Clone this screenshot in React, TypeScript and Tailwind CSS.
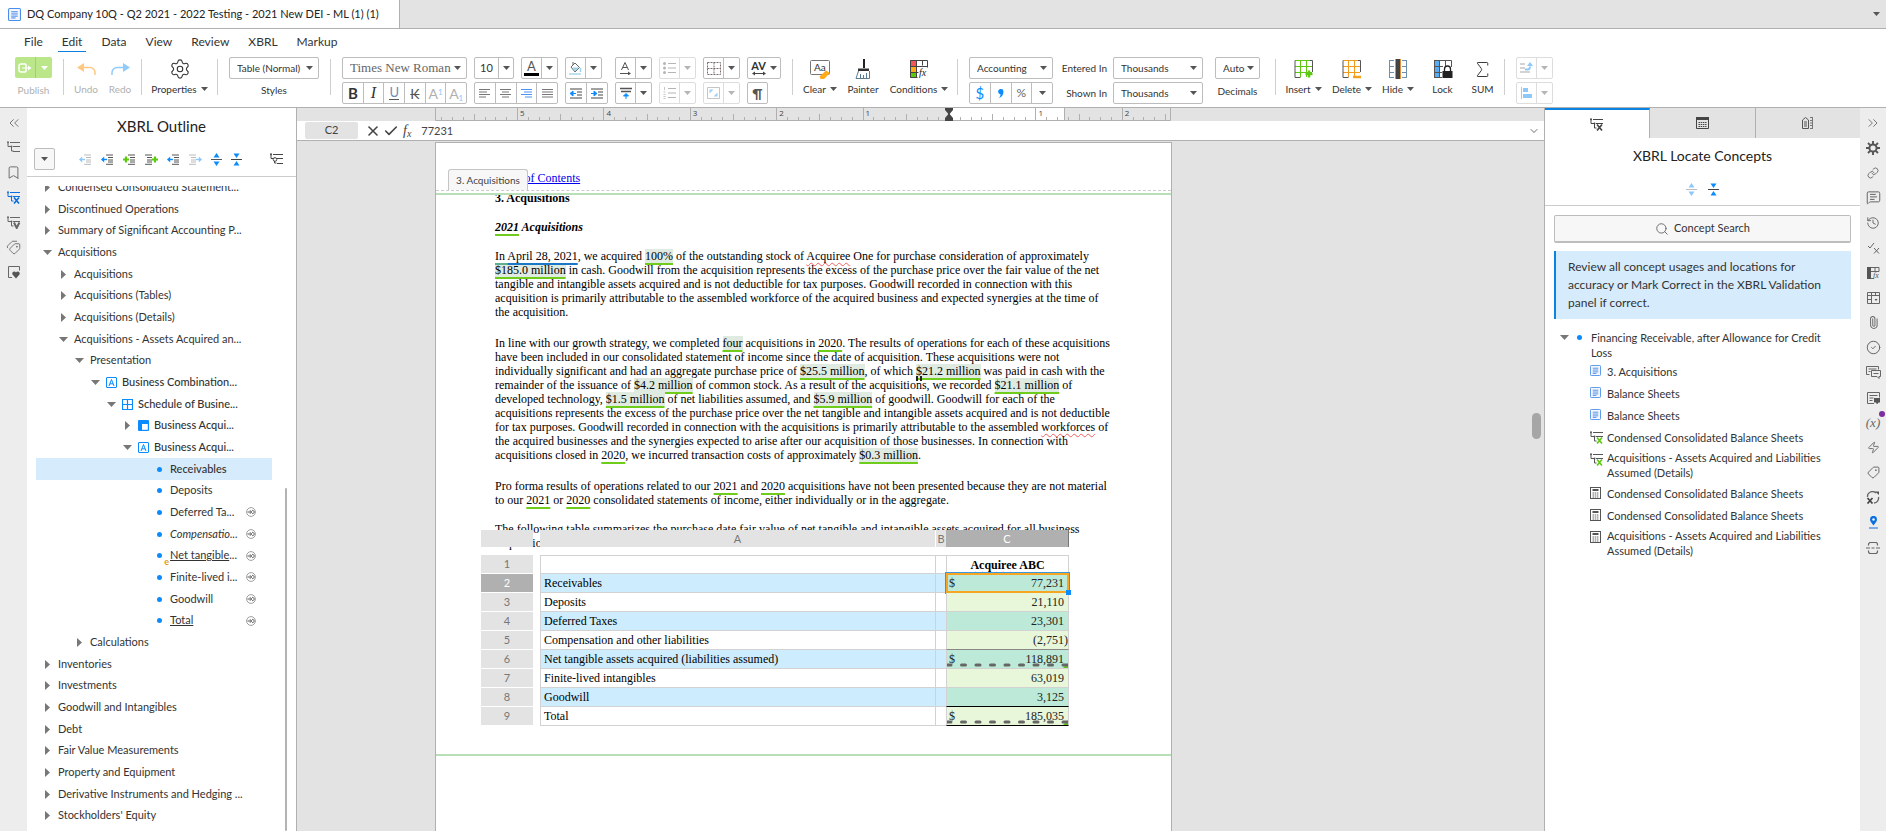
import type { ReactNode } from 'react';
import {
  ChevronsLeft, ChevronsRight, ChevronDown, Bookmark, Tags, Tag, Settings, Link, MessageSquareText,
  History, Paperclip, CircleCheck, Zap, Search, Sigma, X, Check,
} from 'lucide-react';

/* ---------- small shared pieces ---------- */

function Svg({ w, h, vb, children, className = '' }: { w: number; h: number; vb?: string; children: ReactNode; className?: string }) {
  return (
    <svg width={w} height={h} viewBox={vb ?? `0 0 ${w} ${h}`} fill="none" aria-hidden="true" className={`shrink-0 ${className}`}>
      {children}
    </svg>
  );
}

const Caret = ({ className = 'text-[#555]' }: { className?: string }) => (
  <Svg w={7} h={4} className={className}><path d="M0 0h7L3.5 4z" fill="currentColor" /></Svg>
);

const Sep = () => <div className="mx-[11px] mt-0.5 h-9 w-px shrink-0 bg-[#cfcfcf]" />;

function Select({ label, value, className, textClass = 'text-[10px] text-[#333]' }: { label: string; value: string; className: string; textClass?: string }) {
  return (
    <div className={`relative h-[22px] shrink-0 ${className}`}>
      <select aria-label={label} defaultValue={value} className={`h-full w-full appearance-none rounded-[2px] border border-[#bdbdbd] bg-white pl-[7px] ${textClass}`}>
        <option>{value}</option>
      </select>
      <span className="pointer-events-none absolute top-[9px] right-1.5"><Caret /></span>
    </div>
  );
}

/* A row of joined square tool buttons */
function Joined({ children, className = '', faded = false }: { children: ReactNode; className?: string; faded?: boolean }) {
  return (
    <div className={`flex h-[22px] shrink-0 divide-x rounded-[2px] border ${faded ? 'divide-[#ddd] border-[#ddd]' : 'divide-[#bdbdbd] border-[#bdbdbd]'} ${className}`}>
      {children}
    </div>
  );
}

function Btn({ label, children, className = 'flex-1' }: { label: string; children: ReactNode; className?: string }) {
  return (
    <button type="button" aria-label={label} className={`flex items-center justify-center ${className}`}>{children}</button>
  );
}

function Split({ label, children, faded = false, className = 'w-[37px]' }: { label: string; children: ReactNode; faded?: boolean; className?: string }) {
  return (
    <Joined className={className} faded={faded}>
      <Btn label={label} className="w-5">{children}</Btn>
      <Btn label={`${label} options`}><Caret className={faded ? 'text-[#b5b5b5]' : 'text-[#555]'} /></Btn>
    </Joined>
  );
}

function BigTool({ label, children, className, caret = false, labelClass = 'text-[#333]' }: { label: string; children: ReactNode; className: string; caret?: boolean; labelClass?: string }) {
  return (
    <button type="button" className={`flex shrink-0 flex-col items-center ${className}`}>
      <span className="flex h-6 items-center">{children}</span>
      <span className={`flex h-4 items-center gap-1 text-[10px] whitespace-nowrap ${labelClass}`}>{label}{caret && <Caret />}</span>
    </button>
  );
}

/* ---------- icons ---------- */

const Lines = ({ xs, color = '#777' }: { xs: [number, number][]; color?: string }) => (
  <Svg w={13} h={11}>{xs.map(([a, b], i) => <path key={i} d={`M${a} ${1.5 + i * 2.5}H${b}`} stroke={color} />)}</Svg>
);

const DocIcon = ({ s = 12 }: { s?: number }) => (
  <Svg w={s} h={s} vb="0 0 12 12">
    <rect x=".5" y=".5" width="11" height="11" rx="1" stroke="#4a90e8" fill="#f5f6ff" />
    <path d="M3 3.5h6M3 5.5h6M3 7.5h6M3 9.2h4" stroke="#3b82e6" strokeWidth=".9" />
  </Svg>
);

function OutlineIcon({ mark = '', color = '#666', markColor }: { mark?: string; color?: string; markColor?: string }) {
  const m = markColor ?? color;
  return (
    <Svg w={14} h={13}>
      <path d="M1 1.5v4h3M3 1.5h10M6 5.5h7M4.5 5.5v4.500h2" stroke={color} />
      <circle cx="1" cy="1.3" r="1" fill={color} />
      <circle cx="4.500" cy="5.500" r="1" fill={color} />
      {mark === '' && <path d="M6 10.500h7" stroke={color} />}
      {mark === 'o' && <><circle cx="5" cy="6.500" r="1.800" fill="#fff" stroke={color} /><path d="M7 10.500h6" stroke={color} /></>}
      {mark === 'x' && <path d="M7 6.500l5 6M12 6.500l-5 6" stroke={m} strokeWidth="1.600" />}
      {mark === 'v' && <path d="M7 6.500l2.700 5.500 2.700-5.500" stroke={m} strokeWidth="2" />}
    </Svg>
  );
}

/* List lines with a coloured arrow or plus beside them */
function ListArrow({ kind, side = 'left', color, line = '#555' }: { kind: 'plus' | 'left' | 'right'; side?: 'left' | 'right'; color: string; line?: string }) {
  const lx = side === 'left' ? 5 : 0;
  const ax = side === 'left' ? 0 : 7;
  return (
    <Svg w={13} h={11}>
      <path d={`M${lx} 1h7M${lx + 2} 3.500h5M${lx + 2} 6h5M${lx + 2} 8h5M${lx} 10.300h7`} stroke={line} />
      {kind === 'plus' && <path d={`M${ax} 5.500h6M${ax + 3} 2.500v6`} stroke={color} strokeWidth="2.200" />}
      {kind === 'left' && <><path d={`M${ax + 2} 5.500h4`} stroke={color} strokeWidth="1.400" /><path d={`M${ax} 5.500l3.200-3v6z`} fill={color} /></>}
      {kind === 'right' && <><path d={`M${ax} 5.500h4`} stroke={color} strokeWidth="1.400" /><path d={`M${ax + 6} 5.500l-3.200-3v6z`} fill={color} /></>}
    </Svg>
  );
}

const ExpandIcon = ({ faded = false }: { faded?: boolean }) => (
  <Svg w={11} h={13}>
    <path d="M5.500 0l3 4.500h-6zM5.500 13l3-4.500h-6z" fill={faded ? '#8cc8fa' : '#0a8cff'} />
    <path d="M0 6.500h11" stroke={faded ? '#bbb' : '#555'} />
  </Svg>
);

const CollapseIcon = () => (
  <Svg w={11} h={13}>
    <path d="M5.500 5l3-4.500h-6zM5.500 8l3 4.500h-6z" fill="#0a8cff" />
    <path d="M0 6.500h11" stroke="#444" />
  </Svg>
);

const GridIcon = ({ color, children }: { color: string; children?: ReactNode }) => (
  <Svg w={20} h={20}>
    <path d="M1 1.500h17M1 7.500h17M1 13.500h17M6.500 1v17M12.500 1v17" stroke={color} />
    <path d="M6.500 18.500h-5.500v-17M18.500 13v-11.500h-2.500" stroke="#555" />
    {children}
  </Svg>
);

const CalcIcon = () => (
  <Svg w={11} h={12}>
    <rect x=".5" y=".5" width="10" height="11" stroke="#555" />
    <path d="M2.500 3h6" stroke="#555" strokeWidth="2" />
    <path d="M2.500 6h6M2.500 8h6M2.500 10h6" stroke="#666" strokeDasharray="1.500 .700" />
  </Svg>
);

const BoxA = () => (
  <Svg w={11} h={11}>
    <rect x=".5" y=".5" width="10" height="10" rx=".5" stroke="#0a8cff" />
    <path d="M3 9l2.500-6.500 2.500 6.500M3.900 6.800h3.200" stroke="#0a8cff" />
  </Svg>
);

const BoxGrid = () => (
  <Svg w={11} h={11}><path d="M.5.5h10v10h-10zM5.500.5v10M.5 5.500h10" stroke="#0a8cff" strokeWidth="1.200" /></Svg>
);

const BoxAxis = () => (
  <Svg w={11} h={11}><rect width="11" height="11" rx="1" fill="#0a8cff" /><path d="M4 4h5.800v5.800H4z" fill="#fff" /></Svg>
);

const GoIcon = () => (
  <Svg w={10} h={10}>
    <circle cx="5" cy="5" r="4.400" stroke="#888" strokeWidth=".8" />
    <path d="M1.500 5h4M4 3.300l1.700 1.700-1.700 1.700M6 3.500a1.600 1.600 0 1 1 0 3" stroke="#444" strokeWidth=".9" />
  </Svg>
);

/* ---------- top ---------- */

function TitleBar() {
  return (
    <header className="flex h-[29px] shrink-0 border-b border-[#b0b0b0] bg-[#e3e3e3]">
      <div className="flex h-full w-[400px] items-center gap-1.5 border-r border-[#b0b0b0] bg-white pl-2 text-[11px] whitespace-nowrap text-[#222]">
        <DocIcon s={13} />
        DQ Company 10Q - Q2 2021 - 2022 Testing - 2021 New DEI - ML (1) (1)
      </div>
      <button type="button" aria-label="Documents" className="mr-1.5 ml-auto"><Caret /></button>
    </header>
  );
}

function MenuBar() {
  const items = ['File', 'Edit', 'Data', 'View', 'Review', 'XBRL', 'Markup'];
  return (
    <nav className="flex h-[23px] shrink-0 items-end gap-[11px] bg-white pl-5 text-[12px] text-[#333]">
      {items.map((m) => (
        <button key={m} type="button" className={`h-[19px] border-b px-1 ${m === 'Edit' ? 'border-[#0a7fe0]' : 'border-transparent'}`}>{m}</button>
      ))}
    </nav>
  );
}

function Toolbar() {
  return (
    <div className="flex h-14 shrink-0 items-start overflow-hidden border-b border-[#b0b0b0] bg-white pt-[5px] pl-[15px] text-[10px] text-[#333]">
      <div className="flex w-[37px] shrink-0 flex-col items-center gap-1">
        <div className="flex h-[21px] w-full divide-x divide-[#9fd465] rounded-[2px] bg-[#bbe78a]">
          <Btn label="Publish document" className="w-[21px]">
            <Svg w={14} h={10}><path d="M8 1H3a2 2 0 0 0-2 2v4a2 2 0 0 0 2 2h5" stroke="#fff" strokeWidth="1.500" /><path d="M8 1v8" stroke="#fff" strokeWidth="1.500" /><path d="M4 5h7" stroke="#fff" /><path d="M10 2.500L13.500 5 10 7.500z" fill="#fff" /></Svg>
          </Btn>
          <Btn label="Publish options"><Caret className="text-white" /></Btn>
        </div>
        <span className="leading-4 text-[#b0b0b0]">Publish</span>
      </div>
      <Sep />
      <BigTool label="Undo" className="mr-[13px] w-[22px]" labelClass="text-[#b0b0b0]">
        <Svg w={19} h={14}><path d="M7 1v9L0 5.500z" fill="#ffc983" /><path d="M6 5.500h7a5 5 0 0 1 5 5V13" stroke="#ffc983" strokeWidth="1.500" /></Svg>
      </BigTool>
      <BigTool label="Redo" className="w-5" labelClass="text-[#b0b0b0]">
        <Svg w={19} h={14}><path d="M12 1v9l7-4.500z" fill="#90cbfb" /><path d="M13 5.500H6a5 5 0 0 0-5 5V13" stroke="#90cbfb" strokeWidth="1.500" /></Svg>
      </BigTool>
      <Sep />
      <BigTool label="Properties" className="w-[53px]" caret><Settings size={22} strokeWidth={1.2} /></BigTool>
      <Sep />
      <div className="flex w-[90px] shrink-0 flex-col items-center gap-[3px]">
        <Select label="Style" value="Table (Normal)" className="w-full" />
        <span className="leading-4">Styles</span>
      </div>
      <Sep />
      <div className="flex gap-[7px]">
        <div className="flex w-[125px] flex-col gap-[3px]">
          <Select label="Font" value="Times New Roman" className="w-full" textClass="font-['Liberation_Serif',serif] text-[13px] text-[#666]" />
          <Joined>
            <Btn label="Bold"><b className="text-[15px] text-[#333]">B</b></Btn>
            <Btn label="Italic"><i className="font-['Liberation_Serif',serif] text-[16px]">I</i></Btn>
            <Btn label="Underline"><span className="border-b border-[#555] text-[13px] leading-[13px] text-[#6a8db8]">U</span></Btn>
            <Btn label="Strikethrough"><span className="text-[14px] text-[#555] line-through">K</span></Btn>
            <Btn label="Superscript"><span className="text-[14px] text-[#b0b0b0]">A<sup className="text-[8px] text-[#8cc8fa]">1</sup></span></Btn>
            <Btn label="Subscript"><span className="text-[14px] text-[#b0b0b0]">A<sub className="text-[8px] text-[#8cc8fa]">1</sub></span></Btn>
          </Joined>
        </div>
        <div className="flex w-[84px] flex-col gap-[3px]">
          <div className="flex gap-[7px]">
            <Joined className="w-10">
              <Btn label="Font size" className="w-6"><span className="text-[11px]">10</span></Btn>
              <Btn label="Font size options"><Caret /></Btn>
            </Joined>
            <Split label="Font color"><span className="border-b-[3px] border-black px-[3px] text-[13px] leading-[13px] text-[#555]">A</span></Split>
          </div>
          <Joined>
            <Btn label="Align left"><Lines xs={[[1, 12], [1, 9], [1, 12], [1, 8]]} /></Btn>
            <Btn label="Align center"><Lines xs={[[1, 12], [3, 10], [1, 12], [3, 10]]} /></Btn>
            <Btn label="Align right"><Lines color="#4d94f0" xs={[[1, 12], [4, 12], [1, 12], [5, 12]]} /></Btn>
            <Btn label="Justify"><Lines xs={[[1, 12], [1, 12], [1, 12], [1, 12]]} /></Btn>
          </Joined>
        </div>
        <div className="flex w-[43px] flex-col gap-[3px]">
          <Split label="Fill color">
            <Svg w={15} h={14}><path d="M1 13h12" stroke="#bfe0ee" strokeWidth="2" /><path d="M3 6l4-4 4.500 4.500L7 11z" stroke="#666" /><path d="M4.500 6.500h6.500L7 10.500z" fill="#9ed4ea" /><path d="M5 4V1" stroke="#666" /><path d="M12.500 7v4" stroke="#9ed4ea" strokeWidth="1.500" /></Svg>
          </Split>
          <Joined>
            <Btn label="Decrease indent"><Svg w={12} h={11}><path d="M0 1h12M7 4h5M7 7h5M0 10h12" stroke="#444" /><path d="M0 5.500L3 3v5zM2 5.500h4" fill="#0a8cff" stroke="#0a8cff" /></Svg></Btn>
            <Btn label="Increase indent"><Svg w={12} h={11}><path d="M0 1h12M7 4h5M7 7h5M0 10h12" stroke="#444" /><path d="M6 5.500L3 3v5zM0 5.500h4" fill="#0a8cff" stroke="#0a8cff" /></Svg></Btn>
          </Joined>
        </div>
        <div className="flex w-[37px] flex-col gap-[3px]">
          <Split label="Text direction">
            <Svg w={12} h={13}><path d="M1.500 8L5 0.500 8.500 8M2.700 5.500h4.600" stroke="#555" /><path d="M0 11.500h9" stroke="#555" /><path d="M8 9.500l3 2-3 2z" fill="#555" /></Svg>
          </Split>
          <Split label="Vertical align">
            <Svg w={12} h={12}><path d="M0 1.500h12M1 4.500h10" stroke="#555" strokeWidth="1.300" /><path d="M6 6.500l2.500 2.500h-5zM6 8v4" fill="#0a8cff" stroke="#0a8cff" /></Svg>
          </Split>
        </div>
        <div className="flex w-[37px] flex-col gap-[3px]">
          <Split label="Bullets" faded><Svg w={13} h={12}><path d="M5 1.500h8M5 6h8M5 10.500h8" stroke="#b5b5b5" /><circle cx="1.500" cy="1.500" r="1.500" fill="#b5b5b5" /><circle cx="1.500" cy="6" r="1.500" fill="#b5b5b5" /><circle cx="1.500" cy="10.500" r="1.500" fill="#b5b5b5" /></Svg></Split>
          <Split label="Numbering" faded><Svg w={13} h={12}><path d="M5 1.500h8M5 6h8M5 10.500h8" stroke="#b5b5b5" /><path d="M1.500 0v3M.5 5h2M.5 7.500h2M.5 9.500h2M.5 11.500h2" stroke="#c5c5c5" /></Svg></Split>
        </div>
        <div className="flex w-[37px] flex-col gap-[3px]">
          <Split label="Borders"><Svg w={14} h={13}><path d="M.5.5h13v12H.5zM7 .5v12M.5 6.500h13" stroke="#7a6a6a" strokeDasharray="2 1" /></Svg></Split>
          <Split label="Merge cells" faded><Svg w={13} h={12}><path d="M.5.5h12v11H.5z" stroke="#c5c5c5" /><path d="M2.500 2.500h4l-4 4zM10.500 9.500h-4l4-4z" fill="#9ed0f5" /></Svg></Split>
        </div>
        <div className="flex flex-col gap-[3px]">
          <Joined className="w-[34px]">
            <button type="button" aria-label="Character spacing" className="flex flex-1 items-center justify-center gap-1">
              <span className="flex flex-col items-center text-[11px] leading-[10px] font-bold">AV<Svg w={14} h={5}><path d="M1 2.500h12" stroke="#444" /><path d="M0 2.500L3 .5v4zM14 2.500L11 .5v4z" fill="#444" /></Svg></span>
              <Caret />
            </button>
          </Joined>
          <Joined className="w-[21px]"><Btn label="Show marks"><span className="text-[14px] font-bold text-[#555]">¶</span></Btn></Joined>
        </div>
      </div>
      <Sep />
      <BigTool label="Clear" className="mr-3 w-8" caret>
        <Svg w={21} h={19}><rect x=".5" y=".5" width="19" height="14" rx="1" stroke="#777" fill="#fff" /><text x="4" y="11" fontSize="10" fill="#333" fontFamily="Lato, sans-serif">Aa</text><path d="M9.500 16.500l6.500-6 4 2.500-6 6h-3.500z" fill="#ffab1a" /></Svg>
      </BigTool>
      <BigTool label="Painter" className="mr-3.5 w-[30px]">
        <Svg w={16} h={21}><path d="M9 0v9" stroke="#222" strokeWidth="2" /><path d="M3 12V9.500h11V12z" fill="#333" /><path d="M3.500 12L1 19.500h13.500V12M5.500 19v-4M8.500 19v-3M11.500 19v-5" stroke="#5a7c94" /></Svg>
      </BigTool>
      <BigTool label="Conditions" className="w-[54px]" caret>
        <Svg w={18} h={18}>
          <path d="M0 0h6v6H0z" fill="#f25555" /><path d="M0 6h6v6H0z" fill="#ffab1a" /><path d="M0 12h6v6H0z" fill="#5dc90e" />
          <path d="M.5.5h17v7M.5.5v17h7M6.500.5v17M12.500.5v5M.5 6.500h17M.5 12.500h8" stroke="#444" />
          <text x="9" y="16" fontSize="10" fontStyle="italic" fill="#222" fontFamily="Liberation Serif, serif">fx</text>
        </Svg>
      </BigTool>
      <Sep />
      <div className="flex w-[84px] shrink-0 flex-col gap-[3px]">
        <Select label="Number format" value="Accounting" className="w-full" />
        <Joined>
          <Btn label="Currency"><span className="text-[15px] text-[#0a8cff]">$</span></Btn>
          <Btn label="Thousands separator"><Svg w={6} h={9}><path d="M3 0a2.500 2.500 0 0 1 2.500 2.600C5.500 5.500 4 8 1 9c1-1.300 1.500-2.300 1.500-3.800A2.500 2.500 0 0 1 3 0z" fill="#0a8cff" /></Svg></Btn>
          <Btn label="Percent"><span className="text-[12px] text-[#666]">%</span></Btn>
          <Btn label="More formats"><Caret /></Btn>
        </Joined>
      </div>
      <div className="ml-2.5 flex w-11 shrink-0 flex-col items-end gap-[3px] whitespace-nowrap">
        <span className="flex h-[22px] items-center">Entered In</span>
        <span className="flex h-[22px] items-center">Shown In</span>
      </div>
      <div className="ml-1.5 flex w-[90px] shrink-0 flex-col gap-[3px]">
        <Select label="Entered in" value="Thousands" className="w-full" />
        <Select label="Shown in" value="Thousands" className="w-full" />
      </div>
      <div className="ml-3 flex w-[45px] shrink-0 flex-col items-center gap-1">
        <Select label="Decimals" value="Auto" className="w-full" />
        <span className="leading-4">Decimals</span>
      </div>
      <div className="ml-1"><Sep /></div>
      <BigTool label="Insert" className="mr-3.5 w-[33px]" caret><GridIcon color="#5cc814"><path d="M15 11.500v7M11.500 15h7" stroke="#5cc814" strokeWidth="2.500" /></GridIcon></BigTool>
      <BigTool label="Delete" className="mr-[13px] w-9" caret><GridIcon color="#f09a1e"><path d="M11 18h8" stroke="#f5a11e" strokeWidth="2.500" /></GridIcon></BigTool>
      <BigTool label="Hide" className="mr-5 w-[30px]" caret>
        <Svg w={20} h={20}><path d="M1 1.500h5M1 7.500h5M1 13.500h5M1 18.500h5M1.500 1v18M14 1.500h5M14 7.500h5M14 13.500h5M14 18.500h5M18.500 1v18" stroke="#6f8fb0" /><path d="M8 0h5v20H8z" fill="#444" /><path d="M7.500 0v20M12.500 0v20" stroke="#e0903f" /></Svg>
      </BigTool>
      <BigTool label="Lock" className="mr-5 w-[19px]">
        <Svg w={20} h={20}><path d="M1 1h6v17H1z" fill="#58aef5" /><path d="M1 1.500h17.500V8M1 7.500h9M1 13.500h8M6.500 1v17M12.500 1v6M1 18.500h8M1.500 1v17" stroke="#555" /><path d="M9.500 12h10v7h-10z" fill="#222" /><path d="M11.500 12v-2a3 3 0 0 1 6 0v2" stroke="#222" strokeWidth="1.300" fill="#fff" /></Svg>
      </BigTool>
      <BigTool label="SUM" className="w-[21px]"><Sigma size={21} strokeWidth={1.1} /></BigTool>
      <Sep />
      <div className="flex shrink-0 flex-col gap-[3px]">
        <Split label="Arrange" faded><Svg w={13} h={12}><path d="M0 2h5M0 6h5M0 10h10" stroke="#c5c5c5" strokeWidth="1.300" /><path d="M5 7.500h2.500q2.500 0 2.500-3" stroke="#8cc8fa" strokeWidth="1.800" /><path d="M7 4l3-4 3 4z" fill="#8cc8fa" /></Svg></Split>
        <Split label="Align objects" faded><Svg w={11} h={12}><path d="M.5 0v12" stroke="#a8c8e0" /><path d="M2 1h5v4H2zM2 7h9v4H2z" fill="#8cc8fa" /></Svg></Split>
      </div>
    </div>
  );
}

/* ---------- left side ---------- */

function LeftRail() {
  const cell = 'flex h-[25px] w-full items-center justify-center text-[#666]';
  return (
    <nav className="flex w-[27px] shrink-0 flex-col bg-[#ededed] pt-0.5">
      <button type="button" aria-label="Collapse panel" className={cell}><ChevronsLeft size={16} strokeWidth={1.3} /></button>
      <button type="button" aria-label="Outline" className={cell}><OutlineIcon /></button>
      <button type="button" aria-label="Bookmarks" className={cell}><Bookmark size={15} strokeWidth={1.5} /></button>
      <button type="button" aria-label="XBRL outline" className={cell}><OutlineIcon mark="x" color="#0a6fe0" /></button>
      <button type="button" aria-label="Validation outline" className={cell}><OutlineIcon mark="v" /></button>
      <button type="button" aria-label="Tags" className={cell}><Tags size={15} strokeWidth={1.4} className="rotate-90" /></button>
      <button type="button" aria-label="Favorites" className={cell}>
        <Svg w={14} h={13}><path d="M5 11.500H1.500v-11h11v4" stroke="#666" /><path d="M9 12.500l-3.500-4a1.900 1.900 0 0 1 3.500-2 1.900 1.900 0 0 1 3.500 2z" fill="#555" /></Svg>
      </button>
    </nav>
  );
}

type Node = {
  t: ReactNode; l: number; open?: boolean; leaf?: boolean; icon?: ReactNode; cls?: string; go?: boolean; sel?: boolean; ext?: boolean;
};

const indent = ['pl-[3px]', 'pl-[19px]', 'pl-[35px]', 'pl-[51px]', 'pl-[67px]', 'pl-[83px]', 'pl-[99px]'];

const tree: Node[] = [
  { t: 'Condensed Consolidated Statement...', l: 0 },
  { t: 'Discontinued Operations', l: 0 },
  { t: 'Summary of Significant Accounting P...', l: 0 },
  { t: 'Acquisitions', l: 0, open: true },
  { t: 'Acquisitions', l: 1 },
  { t: 'Acquisitions (Tables)', l: 1 },
  { t: 'Acquisitions (Details)', l: 1 },
  { t: 'Acquisitions - Assets Acquired an...', l: 1, open: true },
  { t: 'Presentation', l: 2, open: true },
  { t: 'Business Combination...', l: 3, open: true, icon: <BoxA />, cls: 'font-medium' },
  { t: 'Schedule of Busine...', l: 4, open: true, icon: <BoxGrid />, cls: 'font-medium' },
  { t: 'Business Acqui...', l: 5, icon: <BoxAxis />, cls: 'font-medium' },
  { t: 'Business Acqui...', l: 5, open: true, icon: <BoxA />, cls: 'font-medium' },
  { t: 'Receivables', l: 6, leaf: true, sel: true, cls: 'font-medium' },
  { t: 'Deposits', l: 6, leaf: true },
  { t: 'Deferred Ta...', l: 6, leaf: true, go: true },
  { t: 'Compensatio...', l: 6, leaf: true, go: true, cls: 'italic' },
  { t: <><u>Net tangible</u>...</>, l: 6, leaf: true, go: true, ext: true },
  { t: 'Finite-lived i...', l: 6, leaf: true, go: true },
  { t: 'Goodwill', l: 6, leaf: true, go: true },
  { t: <u>Total</u>, l: 6, leaf: true, go: true },
  { t: 'Calculations', l: 2 },
  { t: 'Inventories', l: 0 },
  { t: 'Investments', l: 0 },
  { t: 'Goodwill and Intangibles', l: 0 },
  { t: 'Debt', l: 0 },
  { t: 'Fair Value Measurements', l: 0 },
  { t: 'Property and Equipment', l: 0 },
  { t: 'Derivative Instruments and Hedging ...', l: 0 },
  { t: "Stockholders' Equity", l: 0 },
  { t: 'Commitments and Contingencies', l: 0 },
];

function TreeRow({ n }: { n: Node }) {
  return (
    <li className={`flex h-[22px] items-center nth-[3n]:h-[21px] ${indent[n.l]} ${n.sel ? 'bg-[#d6ecfd]' : ''}`}>
      <span className="flex w-4 shrink-0 justify-center">
        {!n.leaf && (n.open
          ? <Svg w={9} h={5}><path d="M0 0h9L4.500 5z" fill="#777" /></Svg>
          : <Svg w={5} h={9}><path d="M0 0v9L5 4.500z" fill="#777" /></Svg>)}
      </span>
      {n.icon && <span className="flex w-4 shrink-0 justify-center">{n.icon}</span>}
      {n.leaf && (
        <span className="relative flex w-4 shrink-0 justify-center">
          <span className="size-[5px] rounded-full bg-[#0a8cff]" />
          {n.ext && <span className="absolute -right-0.5 -bottom-2 text-[9px] leading-[9px] font-bold text-[#e09a10]">e</span>}
        </span>
      )}
      <button type="button" className={`ml-[3px] text-left whitespace-nowrap ${n.cls ?? ''}`}>{n.t}</button>
      {n.go && <button type="button" aria-label="Go to usage" className="mr-4 ml-auto"><GoIcon /></button>}
    </li>
  );
}

function OutlinePanel() {
  return (
    <section className="relative flex w-[270px] shrink-0 flex-col overflow-hidden border-r border-[#b0b0b0] bg-white">
      <h2 className="pt-1.5 text-center text-[15px] leading-6 text-[#222]">XBRL Outline</h2>
      <div className="mt-2.5 flex h-[29px] shrink-0 items-start border-b border-[#ccc] pl-[7px]">
        <button type="button" aria-label="Filter" className="flex h-[22px] w-[21px] items-center justify-center rounded-[2px] border border-[#bdbdbd] bg-[#f7f7f7]"><Caret /></button>
        <div className="ml-6 flex h-[22px] items-center gap-[9px]">
          <ListArrow kind="left" color="#8cc8fa" line="#bbb" />
          <ListArrow kind="left" color="#0a8cff" />
          <ListArrow kind="plus" color="#5dc90e" />
          <ListArrow kind="plus" side="right" color="#5dc90e" />
          <ListArrow kind="left" color="#0a8cff" />
          <ListArrow kind="right" side="right" color="#8cc8fa" line="#bbb" />
          <ExpandIcon />
          <CollapseIcon />
        </div>
        <span className="mr-3 ml-auto flex h-[22px] items-center"><OutlineIcon mark="o" color="#444" /></span>
      </div>
      <div className="mt-[9px] min-h-0 flex-1 overflow-hidden">
        <ul className="-mt-2.5 mr-6 ml-[9px] text-[11px] text-[#333]">
          {tree.map((n, i) => <TreeRow key={i} n={n} />)}
        </ul>
      </div>
      <span className="absolute top-[380px] right-[9px] bottom-0 w-0.5 rounded-full bg-[#b3b3b3]" />
    </section>
  );
}

/* ---------- document ---------- */

function Ruler() {
  const zero = 514;
  const ticks = Array.from({ length: 68 }, (_, k) => k - 47).filter((i) => i !== 0);
  return (
    <div className="h-[13px] shrink-0 bg-[#e3e3e3] pl-[138px]">
      <svg width="736" height="13" viewBox="0 0 736 13" role="img" aria-label="Ruler">
        <path d="M514 0h115v13H514z" fill="#fff" />
        {ticks.map((i) => {
          const x = Math.round(zero + i * 10.8) + 0.5;
          const inch = i % 8 === 0;
          const top = inch ? 0 : i % 4 === 0 ? 6 : 9;
          return <path key={i} d={`M${x} ${top}V13`} stroke="#b0b0b0" />;
        })}
        {[-5, -4, -3, -2, -1, 1, 2].map((n) => (
          <text key={n} x={zero + n * 86.4 + 3} y="8" fontSize="8" fill="#444" fontFamily="Open Sans, sans-serif">{Math.abs(n)}</text>
        ))}
        <path d="M0.5 0v12.500h735V0M629.500 0v12" stroke="#b0b0b0" fill="none" />
        <path d="M510 0h8v2l-3 3.500v1l3 3.500v3h-8v-3l3-3.500v-1l-3-3.500z" fill="#444" />
      </svg>
    </div>
  );
}

const Tagged = ({ children }: { children: ReactNode }) => (
  <span className="bg-[#dfeae1] underline decoration-[#6fcc1a] decoration-2 underline-offset-[3px] [text-decoration-skip-ink:none]">{children}</span>
);
const Dated = ({ children }: { children: ReactNode }) => (
  <span className="relative underline decoration-[#6fcc1a] decoration-2 underline-offset-[3px] [text-decoration-skip-ink:none]">{children}</span>
);
const Misspelt = ({ children }: { children: ReactNode }) => (
  <span className="underline decoration-[#f06060] decoration-wavy decoration-1 underline-offset-2 [text-decoration-skip-ink:none]">{children}</span>
);

type Row = { a: string; v: string; cur?: boolean; dash?: boolean; sel?: boolean; cls?: string };

const rows: Row[] = [
  { a: 'Receivables', v: '77,231', cur: true, sel: true },
  { a: 'Deposits', v: '21,110' },
  { a: 'Deferred Taxes', v: '23,301' },
  { a: 'Compensation and other liabilities', v: '(2,751)', cls: 'border-b-[#888]' },
  { a: 'Net tangible assets acquired (liabilities assumed)', v: '118,891', cur: true, dash: true },
  { a: 'Finite-lived intangibles', v: '63,019' },
  { a: 'Goodwill', v: '3,125', cls: 'border-b-black' },
  { a: 'Total', v: '185,035', cur: true, dash: true, cls: 'border-b-black' },
];

function Sheet() {
  const head = "h-[19px] border-b border-white bg-[#e3e3e3] p-0 text-center font-['Lato',sans-serif] text-[11px] font-normal text-[#777]";
  const cell = 'border-b border-[#d2d2d2] p-0';
  return (
    <table className="relative z-10 -mt-5 -ml-3.5 w-[588px] table-fixed border-separate border-spacing-0 leading-[14px]">
      <colgroup>
        <col className="w-[52px]" /><col className="w-[7px]" /><col className="w-[395px]" /><col className="w-[11px]" /><col className="w-[123px]" />
      </colgroup>
      <thead className="font-['Lato',sans-serif] text-[11px] text-[#777]">
        <tr>
          <td className="h-[17px] bg-[#e3e3e3] p-0" />
          <td className="p-0" />
          <th scope="col" className="bg-[#e3e3e3] p-0 font-normal">A</th>
          <th scope="col" className="border-l border-white bg-[#e3e3e3] p-0 font-normal">B</th>
          <th scope="col" className="border-r border-[#777] bg-[#b0b0b0] p-0 font-normal text-white">C</th>
        </tr>
        <tr><td colSpan={5} className="h-2 p-0" /></tr>
      </thead>
      <tbody>
        <tr>
          <th scope="row" className={head}>1</th>
          <td className="p-0" />
          <td className={`${cell} border-t border-l`} />
          <td className={`${cell} border-t border-l`} />
          <td className={`${cell} border-x border-t text-center font-bold`}><Misspelt>Acquiree</Misspelt> ABC</td>
        </tr>
        {rows.map((r, i) => {
          const even = i % 2 === 0;
          return (
            <tr key={r.a}>
              <th scope="row" className={r.sel ? "h-[19px] border-b border-white bg-[#b0b0b0] p-0 text-center font-['Lato',sans-serif] text-[11px] font-normal text-white" : head}>{i + 2}</th>
              <td className="p-0" />
              <td className={`${cell} border-l pl-[3px] ${even ? 'bg-[#cdecfe]' : ''}`}>{r.a}</td>
              <td className={`${cell} border-l ${even ? 'bg-[#cdecfe]' : ''}`} />
              <td className={`relative border-x border-b border-[#d2d2d2] p-0 text-[#222] ${even ? 'bg-[#bdead8]' : 'bg-[#e8f6d9]'} ${r.cls ?? ''}`}>
                <div className={`flex pl-0.5 ${r.v.startsWith('(') ? 'pr-0' : 'pr-1'}`}>
                  <span>{r.cur ? '$' : ''}</span>
                  <span className="ml-auto">{r.v}</span>
                </div>
                {r.sel && (
                  <>
                    <span className="absolute -inset-[2px] border border-[#3b97e0]" />
                    <span className="absolute -inset-px border-2 border-[#f5a623]" />
                    <span className="absolute -right-[3px] -bottom-[3px] z-10 size-[5px] bg-[#0a8cff]" />
                  </>
                )}
                {r.dash && (
                  <>
                    <span className="absolute right-0 bottom-0"><Svg w={5} h={5}><path d="M5 0v5H0z" fill="#5dc90e" /></Svg></span>
                    <svg className="absolute right-0 bottom-px left-0 w-full" height="4" aria-hidden="true"><path d="M0 2h122" stroke="#666" strokeWidth="3" strokeDasharray="4 10.500" strokeLinecap="round" /></svg>
                  </>
                )}
              </td>
            </tr>
          );
        })}
      </tbody>
    </table>
  );
}

function Page() {
  return (
    <div className="mt-px ml-[138px] flex w-[737px] flex-1 flex-col border-x border-t border-[#b0b0b0] bg-white font-['Liberation_Serif',serif] text-[12px] leading-[14px] whitespace-nowrap text-black">
      <div className="relative h-[48px] shrink-0 border-b border-dashed border-[#ccc] pt-7 pl-[59px]">
        <a href="#contents" className="text-[#0000ee] underline">Table of Contents</a>
        <span className="absolute bottom-0 left-3 flex h-[21px] w-20 items-center justify-center rounded-t-[3px] border border-b-0 border-[#c5c5c5] bg-[#f7f7f7] font-['Lato',sans-serif] text-[10px] text-[#444]">3. Acquisitions</span>
      </div>
      <div className="mt-0.5 shrink-0 overflow-hidden border-y-2 border-[#b9dfb9] pl-[59px]">
        <h1 className="-mt-1 font-bold">3. Acquisitions</h1>
        <h2 className="mt-[15px] font-bold italic"><Dated>2021</Dated> Acquisitions</h2>
        <p className="mt-[15px]">
          <span className="relative underline decoration-[#5fb08c] decoration-2 underline-offset-[3px] [text-decoration-skip-ink:none]">In </span>
          <span className="relative underline decoration-[#1b78c8] decoration-2 underline-offset-[3px] [text-decoration-skip-ink:none]">April 28, 2021</span>, we acquired <Tagged>100%</Tagged> of the outstanding stock of <Misspelt>Acquiree</Misspelt> One for purchase consideration of approximately<br />
          <Tagged>$185.0 million</Tagged> in cash. Goodwill from the acquisition represents the excess of the purchase price over the fair value of the net<br />
          tangible and intangible assets acquired and is not deductible for tax purposes. Goodwill recorded in connection with this<br />
          acquisition is primarily attributable to the assembled workforce of the acquired business and expected synergies at the time of<br />
          the acquisition.
        </p>
        <p className="mt-[17px]">
          In line with our growth strategy, we completed <Tagged>four</Tagged> acquisitions in <Dated>2020</Dated>. The results of operations for each of these acquisitions<br />
          have been included in our consolidated statement of income since the date of acquisition. These acquisitions were not<br />
          individually significant and had an aggregate purchase price of <Tagged>$25.5 million</Tagged>, of which <span className="relative"><Tagged>$21.2 million</Tagged><span className="absolute -bottom-1 left-0"><Svg w={6} h={6}><path d="M1 0v5M5 0v5" stroke="#222" strokeWidth="2" /></Svg></span></span> was paid in cash with the<br />
          remainder of the issuance of <Tagged>$4.2 million</Tagged> of common stock. As a result of the acquisitions, we recorded <Tagged>$21.1 million</Tagged> of<br />
          developed technology, <Tagged>$1.5 million</Tagged> of net liabilities assumed, and <Tagged>$5.9 million</Tagged> of goodwill. Goodwill for each of the<br />
          acquisitions represents the excess of the purchase price over the net tangible and intangible assets acquired and is not deductible<br />
          for tax purposes. Goodwill recorded in connection with the acquisitions is primarily attributable to the assembled <Misspelt>workforces</Misspelt> of<br />
          the acquired businesses and the synergies expected to arise after our acquisition of those businesses. In connection with<br />
          acquisitions closed in <Dated>2020</Dated>, we incurred transaction costs of approximately <Tagged>$0.3 million</Tagged>.
        </p>
        <p className="mt-[17px]">
          Pro forma results of operations related to our <Dated>2021</Dated> and <Dated>2020</Dated> acquisitions have not been presented because they are not material<br />
          to our <Dated>2021</Dated> or <Dated>2020</Dated> consolidated statements of income, either individually or in the aggregate.
        </p>
        <p className="mt-[15px]">
          The following table summarizes the purchase date fair value of net tangible and intangible assets acquired for all business<br />
          acquisitions:
        </p>
        <Sheet />
        <div className="h-7" />
      </div>
    </div>
  );
}

function Editor() {
  return (
    <main className="relative flex min-w-0 flex-1 flex-col overflow-hidden bg-[#e3e3e3]">
      <Ruler />
      <div className="flex h-5 shrink-0 items-center border-b border-[#b0b0b0] bg-white pl-2 text-[11px] text-[#444]">
        <span className="flex h-[17px] w-[53px] items-center justify-center rounded-[2px] bg-[#e3e3e3]">C2</span>
        <button type="button" aria-label="Cancel" className="ml-[7px]"><X size={16} strokeWidth={2.4} /></button>
        <button type="button" aria-label="Accept" className="ml-0.5"><Check size={16} strokeWidth={2.4} /></button>
        <span className="ml-1 font-['Liberation_Serif',serif] text-[14px] leading-4 italic">f<sub className="text-[10px] leading-none">x</sub></span>
        <input aria-label="Formula" defaultValue="77231" className="ml-2.5 h-full flex-1 text-[11px] outline-none" />
        <button type="button" aria-label="Expand formula bar" className="mr-1"><ChevronDown size={12} strokeWidth={1.6} /></button>
      </div>
      <Page />
      <span className="absolute top-[305px] right-[3px] h-[26px] w-[9px] rounded-full bg-[#a6a6a6]" />
    </main>
  );
}

/* ---------- right side ---------- */

type Loc = { t: string; icon: ReactNode };
const greenX = <OutlineIcon mark="x" color="#555" markColor="#5dc90e" />;
const locations: Loc[] = [
  { t: '3. Acquisitions', icon: <DocIcon s={11} /> },
  { t: 'Balance Sheets', icon: <DocIcon s={11} /> },
  { t: 'Balance Sheets', icon: <DocIcon s={11} /> },
  { t: 'Condensed Consolidated Balance Sheets', icon: greenX },
  { t: 'Acquisitions - Assets Acquired and Liabilities Assumed (Details)', icon: greenX },
  { t: 'Condensed Consolidated Balance Sheets', icon: <CalcIcon /> },
  { t: 'Condensed Consolidated Balance Sheets', icon: <CalcIcon /> },
  { t: 'Acquisitions - Assets Acquired and Liabilities Assumed (Details)', icon: <CalcIcon /> },
];

function LocatePanel() {
  return (
    <aside className="flex w-[316px] shrink-0 flex-col border-l border-[#b0b0b0] bg-white">
      <div className="flex h-[30px] shrink-0 divide-x divide-[#b0b0b0]">
        <button type="button" aria-label="Locate concepts" className="flex flex-1 items-center justify-center border-t-2 border-t-[#0a84e0] bg-white"><OutlineIcon mark="x" color="#444" /></button>
        <button type="button" aria-label="Concept values" className="flex flex-1 items-center justify-center bg-[#e3e3e3]">
          <Svg w={13} h={12}><path d="M.5.5h12v11H.5z" stroke="#444" /><path d="M0 1.500h13" stroke="#444" strokeWidth="3" /><path d="M2.500 5.500h8M2.500 7.500h8M2.500 9.500h8" stroke="#444" strokeDasharray="1.500 .7" /></Svg>
        </button>
        <button type="button" aria-label="Concept properties" className="flex flex-1 items-center justify-center bg-[#e3e3e3]">
          <Svg w={12} h={12}><path d="M.5 11.500V3l3-2.500 3 2.500v8.500zM2 5h3M2 7h3M2 9h3" stroke="#555" /><path d="M10.500 0v12M8 .5h3M8 3.500h3M8 6h3M8 8.500h3M8 11.500h3" stroke="#777" /></Svg>
        </button>
      </div>
      <h2 className="pt-1.5 text-center text-[14px] leading-6 text-[#222]">XBRL Locate Concepts</h2>
      <div className="flex h-[38px] shrink-0 items-center justify-center gap-[11px] border-b border-[#ccc] pt-1.5">
        <ExpandIcon faded />
        <CollapseIcon />
      </div>
      <div className="px-[9px] pt-[9px] text-[11px] text-[#333]">
        <button type="button" className="flex h-7 w-full items-center justify-center gap-[5px] rounded-[2px] border border-b-2 border-[#bdbdbd] bg-[#f7f7f7]">
          <Search size={14} strokeWidth={1.6} className="text-[#666]" />Concept Search
        </button>
        <p className="mt-2 border-l-2 border-[#0a84e0] bg-[#d6ecfd] px-3 py-[7px] text-[12px] leading-[18px]">
          Review all concept usages and locations for accuracy or Mark Correct in the XBRL Validation panel if correct.
        </p>
        <div className="mt-[11px] flex pr-5 leading-[15px]">
          <span className="mt-[5px] flex w-5 shrink-0 justify-center"><Svg w={9} h={5}><path d="M0 0h9L4.500 5z" fill="#777" /></Svg></span>
          <span className="mt-[5px] ml-[3px] size-[5px] shrink-0 rounded-full bg-[#0a8cff]" />
          <button type="button" className="ml-[9px] text-left">Financing Receivable, after Allowance for Credit Loss</button>
        </div>
        <ul className="pr-5 pl-9 leading-[15px]">
          {locations.map((n, i) => (
            <li key={i} className="flex min-h-[22px] items-center py-0.5">
              <span className="flex w-[17px] shrink-0 self-start pt-[3px]">{n.icon}</span>
              <button type="button" className="text-left">{n.t}</button>
            </li>
          ))}
        </ul>
      </div>
    </aside>
  );
}

function RightRail() {
  const items: [string, ReactNode][] = [
    ['Expand', <ChevronsRight size={16} strokeWidth={1.3} />],
    ['Settings', <Svg w={14} h={14}><circle cx="7" cy="7" r="3.600" stroke="#555" strokeWidth="2" /><path d="M7 0v3M7 11v3M0 7h3M11 7h3M2 2l2.200 2.200M9.800 9.800L12 12M12 2L9.800 4.200M4.200 9.800L2 12" stroke="#555" strokeWidth="1.900" /></Svg>],
    ['Links', <Link size={12} strokeWidth={1.8} />],
    ['Comments', <MessageSquareText size={15} strokeWidth={1.6} />],
    ['History', <History size={14} strokeWidth={1.6} />],
    ['Checks', <Svg w={13} h={12}><path d="M1 4l2 2 4-5M7 6l5 5.500M12 6l-5 5.500" stroke="#666" /></Svg>],
    ['Formulas', <Svg w={14} h={12}><path d="M1 0h4v12H1z" fill="#555" /><path d="M5 .5h8v4M5 4.500h8M9 .5v4M5 11.500h3" stroke="#666" /><text x="7" y="11" fontSize="8" fontStyle="italic" fill="#555" fontFamily="Liberation Serif, serif">fx</text></Svg>],
    ['Tables', <Svg w={13} h={12}><path d="M.5.5h12v11H.5zM.5 3.500h12M4.500.5v11M8.500.5v3M.5 7.500h4" stroke="#666" /><path d="M7.500 7h3l-1.500 2z" fill="#555" /></Svg>],
    ['Attachments', <Paperclip size={13} strokeWidth={1.8} className="-rotate-45" />],
    ['Approvals', <CircleCheck size={15} strokeWidth={1.6} />],
    ['Discussions', <Svg w={15} h={13}><path d="M3.500 8.500H.5v-8h12v3M2.500 3h8M2.500 5.500h2" stroke="#666" /><path d="M5.500 4.500h9v6h-1.500v2l-2-2h-5.500zM7.500 7.500h5" stroke="#666" /></Svg>],
    ['Notes', <Svg w={13} h={12}><path d="M7 11.500H.5V.5h12v5M2.500 3.500h8M2.500 6h4M2.500 8.500h3" stroke="#666" /><path d="M7 6h6v4.500h-1.500L10 12.500 9 10.500H7z" fill="#555" /></Svg>],
    ['Variables', <span className="relative font-['Liberation_Serif',serif] text-[13px] italic">(x)<span className="absolute -top-0.5 -right-[5px] size-1.5 rounded-full bg-[#7b2fa0]" /></span>],
    ['Actions', <Zap size={13} strokeWidth={1.7} />],
    ['Tags', <Tag size={13} strokeWidth={1.8} className="rotate-90" />],
    ['Refresh tags', <Svg w={14} h={13}><path d="M1.500 6a5 5 0 0 1 8.500-4M12.500 6a5 5 0 0 1-4.500 6" stroke="#666" strokeWidth="1.300" /><path d="M9 .5h4V4z" fill="#555" /><path d="M1.500 7l5 5.500M6.500 7l-5 5.500" stroke="#444" strokeWidth="1.700" /></Svg>],
    ['Locate', <Svg w={11} h={13}><path d="M5.500 9.500C3.300 6.500 2 5 2 3.400a3.500 3.500 0 0 1 7 0C9 5 7.700 6.500 5.500 9.500z" fill="#0a6fe0" /><circle cx="5.500" cy="3.500" r="1.200" fill="#fff" /><path d="M1 12h9" stroke="#0a6fe0" /></Svg>],
    ['Page breaks', <Svg w={14} h={12}><path d="M2.500 3.500V2.500a2 2 0 0 1 2-2h5a2 2 0 0 1 2 2v1M2.500 8.500v1a2 2 0 0 0 2 2h5a2 2 0 0 0 2-2v-1M0 6h4M5.500 6h3M10 6h4" stroke="#666" strokeWidth="1.200" /></Svg>],
  ];
  return (
    <nav className="flex w-[26px] shrink-0 flex-col bg-[#ededed] pt-0.5 text-[#666]">
      {items.map(([label, icon]) => (
        <button key={label} type="button" aria-label={label} className="flex h-[25px] items-center justify-center">{icon}</button>
      ))}
    </nav>
  );
}

export default function App() {
  return (
    <div className="flex h-screen flex-col overflow-hidden font-['Lato',sans-serif]">
      <TitleBar />
      <MenuBar />
      <Toolbar />
      <div className="flex min-h-0 flex-1">
        <LeftRail />
        <OutlinePanel />
        <Editor />
        <LocatePanel />
        <RightRail />
      </div>
    </div>
  );
}
